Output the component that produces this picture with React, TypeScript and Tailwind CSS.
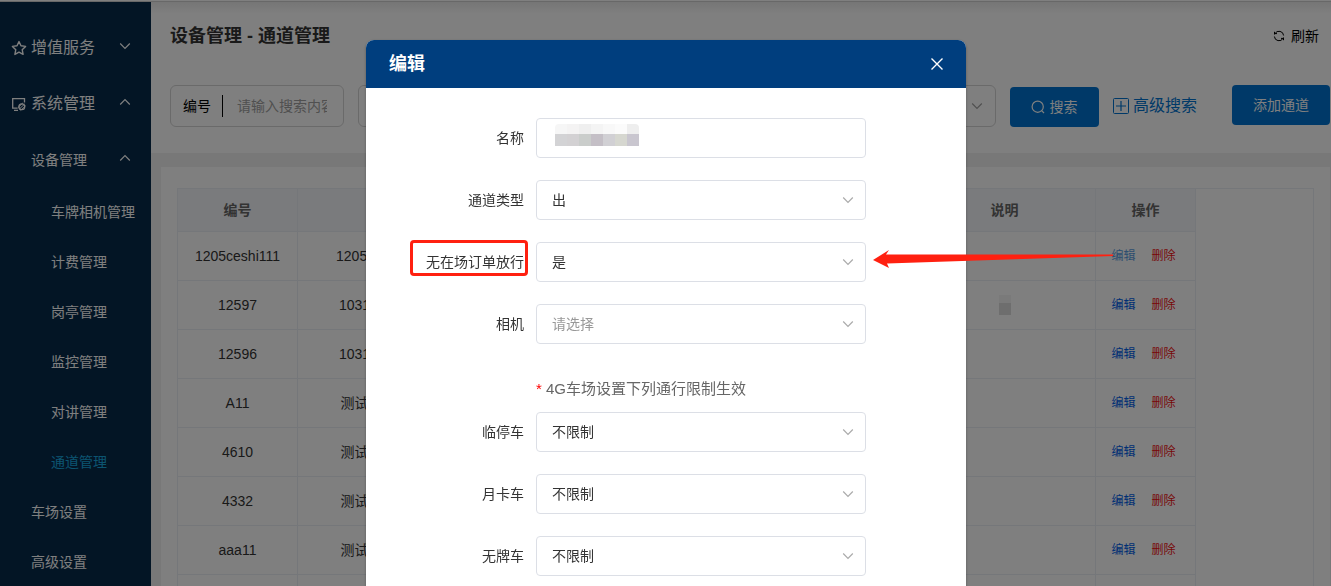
import type React from "react"

import { useState } from "react"

type RowData = {
  id: string
  name: string
  masked?: boolean
  active?: boolean
}

const rows: RowData[] = [
  { id: "1205ceshi111", name: "1205ceshi1112", active: true },
  { id: "12597", name: "1031测试通道", masked: true },
  { id: "12596", name: "1031测试通道" },
  { id: "A11", name: "测试通道设备" },
  { id: "4610", name: "测试通道设备" },
  { id: "4332", name: "测试通道设备" },
  { id: "aaa11", name: "测试通道设备" },
]

const deviceItems = ["车牌相机管理", "计费管理", "岗亭管理", "监控管理", "对讲管理", "通道管理"]

function Chevron({ up, className = "" }: { up?: boolean; className?: string }) {
  return (
    <svg viewBox="0 0 12 12" className={`h-3 w-3 shrink-0 ${className}`} fill="none" stroke="currentColor" strokeWidth="1.2">
      <path d={up ? "M1.200 8.500 6 3.700 10.800 8.500" : "M1.200 3.500 6 8.300 10.800 3.500"} />
    </svg>
  )
}

function StarIcon() {
  return (
    <svg viewBox="0 0 16 16" className="h-4 w-4 shrink-0" fill="none" stroke="currentColor" strokeWidth="1.4">
      <path d="M8 1.6 10 5.8 14.6 6.4 11.2 9.7 12.1 14.4 8 12.1 3.9 14.4 4.8 9.7 1.4 6.4 6 5.8Z" strokeLinejoin="round" />
    </svg>
  )
}

function SystemIcon() {
  return (
    <svg viewBox="0 0 16 16" className="h-4 w-4 shrink-0" fill="none" stroke="currentColor" strokeWidth="1.3">
      <path d="M6.500 12.200H1.700V2.700H13.500V6.500M3 14.300H7" />
      <circle cx="10.8" cy="10.8" r="2.9" />
      <path d="M8 13.400 13.600 8M6.800 11.800 11.800 7M9.500 14.600 14.600 9.800" strokeWidth="1" />
    </svg>
  )
}

function RefreshIcon() {
  return (
    <svg viewBox="0 0 12 12" className="h-3 w-3 shrink-0" fill="none" stroke="currentColor">
      <path d="M1.500 4.500V1.800M1.500 3.600H4M2 3.600A4.600 4.600 0 0 1 10.600 5.500M10.500 7.500V10.200M10.500 8.400H8M10 8.400A4.600 4.600 0 0 1 1.400 6.500" />
    </svg>
  )
}

function SearchIcon() {
  return (
    <svg viewBox="0 0 14 14" className="h-3.5 w-3.5 shrink-0" fill="none" stroke="currentColor" strokeWidth="1.2">
      <circle cx="6.7" cy="6.7" r="5.6" />
      <path d="M10.6 10.6 13 13" />
    </svg>
  )
}

function PlusBoxIcon() {
  return (
    <svg viewBox="0 0 16 16" className="h-4 w-4 shrink-0" fill="none" stroke="currentColor">
      <rect x="0.5" y="0.5" width="15" height="15" rx="1" />
      <path d="M3 8H13M8 3V13" strokeWidth="1.2" />
    </svg>
  )
}

function Sidebar() {
  return (
    <nav className="w-[151px] shrink-0 overflow-hidden bg-[#062a4a] pt-[18px] text-sm text-white">
      <button className="flex h-14 w-full items-center pr-5 pl-[11px] text-base">
        <StarIcon />
        <span className="ml-1">增值服务</span>
        <Chevron className="mb-1 ml-auto" />
      </button>
      <button className="flex h-14 w-full items-center pr-5 pl-[11px] text-base">
        <SystemIcon />
        <span className="ml-1">系统管理</span>
        <Chevron up className="mb-1 ml-auto" />
      </button>
      <button className="flex h-[55px] w-full items-center pr-5 pl-[31px]">
        设备管理
        <Chevron up className="mb-1 ml-auto" />
      </button>
      {deviceItems.map((item) => (
        <a
          key={item}
          href="#"
          className={`flex h-[50px] items-center pl-[51px] ${item === "通道管理" ? "text-[#18a8e0]" : ""}`}
        >
          {item}
        </a>
      ))}
      <a href="#" className="flex h-[50px] items-center pl-[31px]">
        车场设置
      </a>
      <a href="#" className="flex h-[50px] items-center pl-[31px]">
        高级设置
      </a>
    </nav>
  )
}

function Toolbar() {
  return (
    <header className="h-[151px] bg-white bg-linear-to-b from-[#ececec] to-white to-[12px] pl-[19px]">
      <div className="flex h-[67px] items-center justify-between pr-3">
        <h1 className="text-lg font-bold text-[#333]">设备管理 - 通道管理</h1>
        <button className="flex items-center gap-1.5 text-sm text-black">
          <RefreshIcon />
          刷新
        </button>
      </div>
      <div className="flex items-start pt-4">
        <div className="flex h-[42px] w-[174px] shrink-0 items-center rounded-md border border-[#d4d4d4] px-3 text-sm text-black">
          <label htmlFor="search-id">编号</label>
          <span className="ml-[11px] h-[22px] w-px bg-black" />
          <input
            id="search-id"
            placeholder="请输入搜索内容"
            className="ml-3.5 w-[90px] bg-transparent outline-none placeholder:text-[#a0a0a0]"
          />
        </div>
        <div className="ml-3.5 flex h-[42px] min-w-0 flex-1 items-center justify-end rounded-md border border-[#d4d4d4] pr-3 text-[#a0a0a0]">
          <Chevron />
        </div>
        <button className="mt-0.5 ml-3.5 flex h-10 w-[89px] shrink-0 items-center justify-center gap-1 rounded bg-[#0073d0] text-sm text-white">
          <SearchIcon />
          搜索
        </button>
        <button className="mt-[9px] ml-3.5 flex shrink-0 items-center gap-1 text-base text-[#0073d0]">
          <PlusBoxIcon />
          高级搜索
        </button>
        <button className="mr-px ml-[35px] h-10 w-[98px] shrink-0 rounded bg-[#0073d0] text-sm text-white">
          添加通道
        </button>
      </div>
    </header>
  )
}

function ChannelTable() {
  return (
    <table className="-mt-px w-[1019px] table-fixed border-collapse text-center text-sm text-[#333]">
      <colgroup>
        <col className="w-[120px]" />
        <col className="w-[170px]" />
        <col />
        <col className="w-[182px]" />
        <col className="w-[100px]" />
      </colgroup>
      <thead>
        <tr className="h-[43px] bg-[#f5f7fa] text-[#666]">
          <th className="border border-[#ebeef5]">编号</th>
          <th className="border border-[#ebeef5]">名称</th>
          <th className="border border-[#ebeef5]">类型</th>
          <th className="border border-[#ebeef5]">说明</th>
          <th className="border border-[#ebeef5]">操作</th>
        </tr>
      </thead>
      <tbody>
        {rows.map((row) => (
          <tr key={row.id} className="h-[49px]">
            <td className="border border-[#ebeef5]">{row.id}</td>
            <td className="border border-[#ebeef5]">{row.name}</td>
            <td className="border border-[#ebeef5]" />
            <td className="border border-[#ebeef5]">
              {row.masked && (
                <span className="mx-auto block w-3">
                  <span className="block h-2 bg-[#f4f4f4]" />
                  <span className="block h-3 bg-[#dcdcdc]" />
                </span>
              )}
            </td>
            <td className="border border-[#ebeef5] text-xs">
              <div className="flex justify-center gap-4 pr-1">
                <button className={row.active ? "text-[#5a9de0]" : "text-[#0060e8]"}>编辑</button>
                <button className="text-[#f01010]">删除</button>
              </div>
            </td>
          </tr>
        ))}
        <tr className="h-[49px]">
          <td className="border border-[#ebeef5]" />
          <td className="border border-[#ebeef5]" />
          <td className="border border-[#ebeef5]" />
          <td className="border border-[#ebeef5]" />
          <td className="border border-[#ebeef5]" />
        </tr>
      </tbody>
    </table>
  )
}

function FormRow({ id, label, marked, children }: { id: string; label: string; marked?: boolean; children: React.ReactNode }) {
  return (
    <div className="flex items-center">
      <div className="flex w-[170px] shrink-0 justify-end pr-2">
        <label
          htmlFor={id}
          className={
            marked
              ? "-mt-2 flex h-9 w-[118px] items-center justify-end rounded-sm border-3 border-[#ff2010] pt-2 pr-px text-sm"
              : "pr-1 text-sm"
          }
        >
          {label}
        </label>
      </div>
      <div className="relative w-[330px]">{children}</div>
    </div>
  )
}

function SelectRow({ id, label, options, marked }: { id: string; label: string; options: string[]; marked?: boolean }) {
  const [value, setValue] = useState(options[0])

  return (
    <FormRow id={id} label={label} marked={marked}>
      <select
        id={id}
        value={value}
        onChange={(e) => setValue(e.target.value)}
        className={`block h-10 w-full appearance-none rounded border border-[#dcdfe6] bg-white px-[15px] text-sm outline-none ${
          value === "请选择" ? "text-[#999]" : ""
        }`}
      >
        {options.map((option) => (
          <option key={option}>{option}</option>
        ))}
      </select>
      <Chevron className="pointer-events-none absolute top-3.5 right-3 text-[#aaa]" />
    </FormRow>
  )
}

const maskTop = ["bg-[#f6f6f6]", "bg-[#f4f3f3]", "bg-[#efefef]", "bg-[#f4f4f4]", "bg-[#f8f8f8]", "bg-[#fbfbfb]", "bg-[#eeeeee]"]
const maskBottom = ["bg-[#d3d3d5]", "bg-[#d3d1d3]", "bg-[#cacdcb]", "bg-[#c4bfc6]", "bg-[#d1d0d4]", "bg-[#d6d7d0]", "bg-[#c9c6cf]"]

function EditDialog({ onClose }: { onClose: () => void }) {
  return (
    <div
      role="dialog"
      aria-labelledby="dialog-title"
      className="relative mx-auto mt-10 w-[600px] rounded-lg bg-white text-[#333] shadow-[0_1px_3px_rgba(0,0,0,0.3)]"
    >
      <div className="flex h-12 items-center justify-between rounded-t-lg bg-[#003e7e] px-[23px] text-white">
        <h2 id="dialog-title" className="text-lg font-bold">
          编辑
        </h2>
        <button aria-label="关闭" onClick={onClose}>
          <svg viewBox="0 0 12 12" className="h-3 w-3" fill="none" stroke="currentColor" strokeWidth="1.4">
            <path d="M0.5 0.5 11.5 11.5M11.5 0.5 0.5 11.5" />
          </svg>
        </button>
      </div>
      <div className="flex flex-col gap-[22px] pt-[30px] pb-10">
        <FormRow id="name" label="名称">
          <input id="name" className="block h-10 w-full rounded border border-[#dcdfe6] px-[15px] text-sm outline-none" />
          <div className="pointer-events-none absolute top-1.5 left-[19px] overflow-hidden rounded-t">
            <div className="flex">
              {maskTop.map((color, i) => (
                <span key={i} className={`h-2.5 w-3 ${color}`} />
              ))}
            </div>
            <div className="flex">
              {maskBottom.map((color, i) => (
                <span key={i} className={`h-3 w-3 ${color}`} />
              ))}
            </div>
          </div>
        </FormRow>
        <SelectRow id="type" label="通道类型" options={["出", "入"]} />
        <SelectRow id="release" label="无在场订单放行" options={["是", "否"]} marked />
        <SelectRow id="camera" label="相机" options={["请选择"]} />
        <div>
          <p className="py-[11px] pl-[170px] text-[15px] leading-6 text-[#666]">
            <span className="text-[#f00]">*</span> 4G车场设置下列通行限制生效
          </p>
          <SelectRow id="temporary" label="临停车" options={["不限制", "限制"]} />
        </div>
        <SelectRow id="monthly" label="月卡车" options={["不限制", "限制"]} />
        <SelectRow id="unlicensed" label="无牌车" options={["不限制", "限制"]} />
      </div>
      <svg viewBox="0 0 240 20" className="pointer-events-none absolute top-[210px] left-[507px] h-5 w-60" fill="#ff2010">
        <path d="M0 10 16 0 13 4.500 240 4.500 240 6 14 13.500 16 18Z" />
      </svg>
    </div>
  )
}

export default function App() {
  const [isOpen, setIsOpen] = useState(true)

  return (
    <div className="flex h-screen flex-col overflow-hidden bg-white font-['Liberation_Sans','Noto_Sans_CJK_SC',sans-serif]">
      <div className="h-0.5 shrink-0 border-b border-[#d0d0d0]" />
      <div className="flex min-h-0 flex-1">
        <Sidebar />
        <main className="min-w-0 flex-1 bg-[#f0f0f0]">
          <Toolbar />
          <div className="mt-3.5 mr-px ml-2.5 h-full overflow-hidden bg-white px-4 pt-[21px]">
            <div className="h-full border-t border-r border-[#ebeef5]">
              <ChannelTable />
            </div>
          </div>
        </main>
      </div>

      {isOpen && (
        <div className="fixed inset-0 overflow-hidden bg-black/50 pl-px">
          <EditDialog onClose={() => setIsOpen(false)} />
        </div>
      )}
    </div>
  )
}
